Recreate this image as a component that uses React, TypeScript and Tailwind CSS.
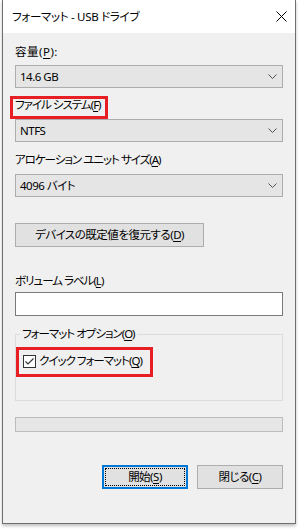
import React from "react";

const font = {
  fontFamily: '"Noto Sans", "Noto Sans CJK JP", sans-serif',
};

function Chevron() {
  return (
    <svg width="9" height="5" viewBox="0 0 9 5" className="block">
      <path d="M0.5 0.5 L4.5 4.5 L8.5 0.5" fill="none" stroke="#505050" strokeWidth="1" />
    </svg>
  );
}

function Select({ value }: { value: string }) {
  return (
    <div className="flex h-[23px] w-[268px] items-center justify-between border border-[#adadad] bg-[#e5e5e5] pl-[4px] pr-[5px] text-black">
      <span>{value}</span>
      <Chevron />
    </div>
  );
}

function Label({ children, mt, tight = true }: { children: React.ReactNode; mt: string; tight?: boolean }) {
  return (
    <div className={`h-[16px] leading-[16px] text-black ${tight ? "tracking-[-1px]" : "tracking-[0.5px]"} ${mt}`}>
      {children}
    </div>
  );
}

function U({ children }: { children: React.ReactNode }) {
  return <span className="underline decoration-1 underline-offset-2">{children}</span>;
}

export default function App() {
  return (
    <div
      className="relative h-[529px] w-[299px] bg-white pl-[2px] text-[11.5px] leading-[16px] tracking-[-0.5px] [font-feature-settings:'palt']"
      style={font}
    >
      <div className="flex h-[524px] w-[294px] flex-col border-x border-b border-[#6f6f6f] bg-[#f0f0f0] shadow-[0_2px_3px_rgba(0,0,0,0.25)]">
        <div className="flex h-[33px] items-center justify-between bg-white pl-[9px] pr-[8px]">
          <span className="tracking-[-0.3px] text-black">フォーマット - USB ドライブ</span>
          <svg width="11" height="11" viewBox="0 0 11 11" className="block">
            <path d="M0.5 0.5 L10.5 10.5 M10.5 0.5 L0.5 10.5" stroke="#000" strokeWidth="1" />
          </svg>
        </div>
        <div className="flex flex-col px-[12px]">
          <Label mt="mt-[11px]" tight={false}>
            容量(<U>P</U>):
          </Label>
          <div className="mt-[5px]">
            <Select value="14.6 GB" />
          </div>
          <Label mt="mt-[9px]">
            ファイル システム(<U>F</U>)
          </Label>
          <div className="mt-[6px]">
            <Select value="NTFS" />
          </div>
          <Label mt="mt-[10px]">
            アロケーション ユニット サイズ(<U>A</U>)
          </Label>
          <div className="mt-[6px]">
            <Select value="4096 バイト" />
          </div>
          <div className="mt-[26px] flex h-[24px] w-[189px] items-center justify-center border border-[#adadad] bg-[#e1e1e1] text-black">
            デバイスの既定値を復元する(<U>D</U>)
          </div>
          <Label mt="mt-[26px]">
            ボリューム ラベル(<U>L</U>)
          </Label>
          <div className="mt-[3px] h-[24px] w-[268px] border border-[#7a7a7a] bg-white" />
          <div className="mt-[18px] flex h-[67px] w-[268px] flex-col border border-[#dcdcdc]">
            <div className="-mt-[9px] ml-[4px] h-[16px] self-start bg-[#f0f0f0] px-[2px] tracking-[-1px] text-black">
              フォーマット オプション(<U>O</U>)
            </div>
            <div className="mt-[11px] flex h-[16px] items-center pl-[7px] text-black">
              <div className="h-[13px] w-[13px] border border-[#333333] bg-white">
                <svg width="11" height="11" viewBox="0 0 11 11" className="block">
                  <path d="M1.5 5.5 L4 8 L9.5 2.5" fill="none" stroke="#333333" strokeWidth="1.2" />
                </svg>
              </div>
              <span className="ml-[3px] tracking-[-1px]">
                クイック フォーマット(<U>Q</U>)
              </span>
            </div>
          </div>
          <div className="mt-[16px] h-[15px] w-[268px] border border-[#bcbcbc] bg-[#e6e6e6]" />
          <div className="mt-[33px] flex w-[268px] justify-end gap-[9px]">
            <div className="flex h-[24px] w-[86px] items-center justify-center border-2 border-[#0078d7] bg-[#e1e1e1]">
              <div className="flex h-[18px] w-[80px] items-center justify-center border border-dotted border-black text-black">
                開始(<U>S</U>)
              </div>
            </div>
            <div className="flex h-[24px] w-[86px] items-center justify-center border border-[#adadad] bg-[#e1e1e1] text-black">
              閉じる(<U>C</U>)
            </div>
          </div>
        </div>
      </div>
      <div className="absolute left-[10px] top-[96px] h-[23px] w-[98px] border-[3px] border-[#e81e25]" />
      <div className="absolute left-[16px] top-[347px] h-[30px] w-[137px] border-[3px] border-[#e81e25]" />
    </div>
  );
}
